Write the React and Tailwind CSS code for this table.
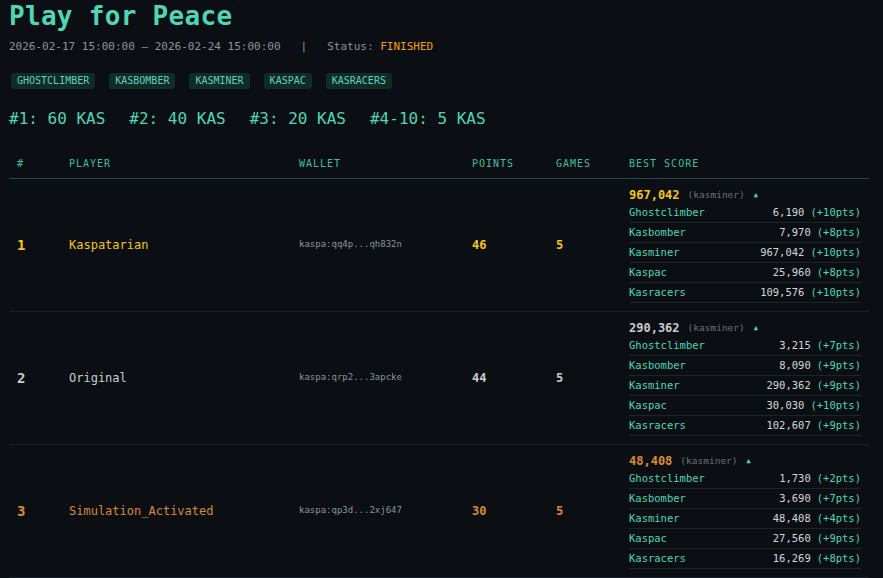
import React from 'react';

const games = ['GHOSTCLIMBER', 'KASBOMBER', 'KASMINER', 'KASPAC', 'KASRACERS'];
const prizes = ['#1: 60 KAS', '#2: 40 KAS', '#3: 20 KAS', '#4-10: 5 KAS'];

const players = [
  {
    rank: '1',
    name: 'Kaspatarian',
    wallet: 'kaspa:qq4p...qh832n',
    points: 46,
    games: 5,
    best: '967,042',
    color: 'text-[#f5c518]',
    scores: [
      ['Ghostclimber', '6,190', '+10pts'],
      ['Kasbomber', '7,970', '+8pts'],
      ['Kasminer', '967,042', '+10pts'],
      ['Kaspac', '25,960', '+8pts'],
      ['Kasracers', '109,576', '+10pts'],
    ],
  },
  {
    rank: '2',
    name: 'Original',
    wallet: 'kaspa:qrp2...3apcke',
    points: 44,
    games: 5,
    best: '290,362',
    color: 'text-[#c9ccd1]',
    scores: [
      ['Ghostclimber', '3,215', '+7pts'],
      ['Kasbomber', '8,090', '+9pts'],
      ['Kasminer', '290,362', '+9pts'],
      ['Kaspac', '30,030', '+10pts'],
      ['Kasracers', '102,607', '+9pts'],
    ],
  },
  {
    rank: '3',
    name: 'Simulation_Activated',
    wallet: 'kaspa:qp3d...2xj647',
    points: 30,
    games: 5,
    best: '48,408',
    color: 'text-[#d98a34]',
    scores: [
      ['Ghostclimber', '1,730', '+2pts'],
      ['Kasbomber', '3,690', '+7pts'],
      ['Kasminer', '48,408', '+4pts'],
      ['Kaspac', '27,560', '+9pts'],
      ['Kasracers', '16,269', '+8pts'],
    ],
  },
];

const cols = 'grid grid-cols-[52px_230px_173px_84px_73px_1fr]';

const App = () => {
  return (
    <div className="min-h-[578px] bg-[#0b0f14] px-[9px] pt-[2px] text-[#c9ccd1]" style={{ fontFamily: '"DejaVu Sans Mono", "Liberation Mono", monospace' }}>
      <h1 className="text-[26px] font-bold leading-[28px] tracking-[0.3px] text-[#4fd6b6]">Play for Peace</h1>

      <div className="mt-[10px] flex items-center text-[11px] leading-[14px] text-[#8d939b]">
        <span>2026-02-17 15:00:00 – 2026-02-24 15:00:00</span>
        <span className="mx-[20px]">|</span>
        <span>Status: <span className="text-[#f59e0b]">FINISHED</span></span>
      </div>

      <div className="mt-[19px] flex gap-[14px] pl-[2px]">
        {games.map((g) => (
          <span key={g} className="rounded-[3px] bg-[#112b27] px-[6px] py-[2px] text-[10px] leading-[12px] text-[#5fd3b8]">
            {g}
          </span>
        ))}
      </div>

      <div className="mt-[20px] flex gap-[24px] text-[16px] font-medium leading-[20px] text-[#4fd6b6]">
        {prizes.map((p) => (
          <span key={p}>{p}</span>
        ))}
      </div>

      <div className="mt-[20px] w-[860px]">
        <div className={`${cols} border-b border-[#1f4d45] text-[10px] leading-[12px] tracking-[1px] text-[#3fbf9f]`}>
          {['#', 'PLAYER', 'WALLET', 'POINTS', 'GAMES', 'BEST SCORE'].map((h) => (
            <div key={h} className="px-2 pb-[8px] pt-[9px]">{h}</div>
          ))}
        </div>

        {players.map((p) => (
          <div key={p.rank} className={`${cols} h-[133px] items-center border-b border-[#1b2030]`}>
            <div className={`px-2 text-[14px] font-bold ${p.color}`}>{p.rank}</div>
            <div className={`px-2 text-[12px] ${p.color}`}>{p.name}</div>
            <div className="px-2 text-[9px] text-[#8d939b]">{p.wallet}</div>
            <div className={`px-2 text-[12px] font-bold ${p.color}`}>{p.points}</div>
            <div className={`px-2 text-[12px] font-bold ${p.color}`}>{p.games}</div>
            <div className="px-2">
              <div className="flex h-[16px] items-center">
                <span className={`text-[12px] font-bold ${p.color}`}>{p.best}</span>
                <span className="ml-[8px] text-[9.5px] text-[#6b7078]">(kasminer)</span>
                <span className="ml-[9px] text-[7px] text-[#4fd6b6]">▲</span>
              </div>
              {p.scores.map(([g, s, pts]) => (
                <div key={g} className="flex h-[20px] items-center justify-between border-b border-[#1a2626] text-[10.5px]">
                  <span className="text-[#4fd6b6]">{g}</span>
                  <span>
                    <span className="text-[#d4d6da]">{s}</span>
                    <span className="ml-[6px] text-[#4fd6b6]">({pts})</span>
                  </span>
                </div>
              ))}
            </div>
          </div>
        ))}
      </div>
    </div>
  );
};

export default App;
